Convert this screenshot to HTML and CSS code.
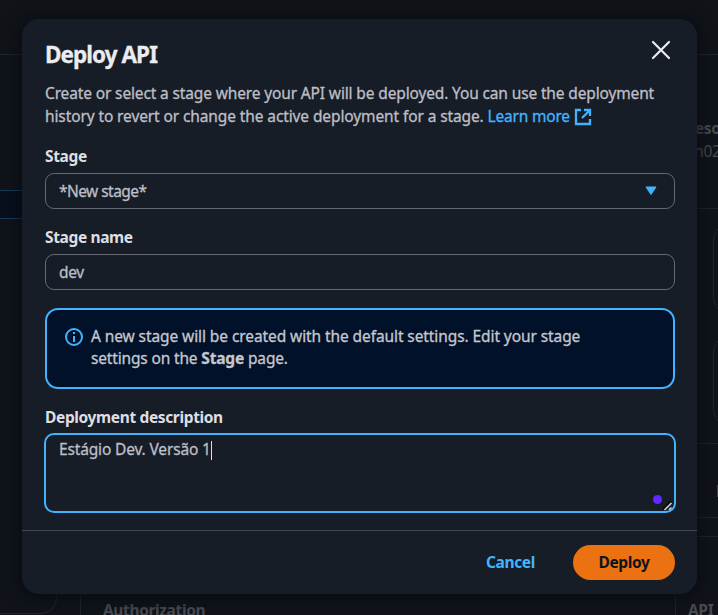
FILE: index.html
```html
<!DOCTYPE html>
<html lang="en">
<head>
<meta charset="utf-8">
<title>Deploy API</title>
<link rel="stylesheet" href="styles.css">
</head>
<body>
<div class="page" aria-hidden="true">
  <div class="topbar"></div>
  <div class="columns">
    <div class="sidebar"><div class="selected"></div></div>
    <div class="main">
      <div class="details"><div class="detail"><b>Resource ID</b><span>hn02</span></div></div>
      <div class="flow"><div class="node"></div><div class="node"></div></div>
      <div class="tabs"><span></span></div>
      <div class="gap"></div>
      <div class="settings"><b class="auth">Authorization</b><b class="key">API</b></div>
    </div>
  </div>
</div>
<div class="modal" role="dialog" aria-label="Deploy API">
  <div class="content">
    <header class="head">
      <h1>Deploy API</h1>
      <button class="close" aria-label="Close"><svg width="20" height="20" viewBox="0 0 20 20"><path d="M2 2 18 18M18 2 2 18"/></svg></button>
    </header>
    <p class="intro"><span class="l1">Create or select a stage where your API will be deployed. You can use the deployment</span><br><span class="l2">history to revert or change the active deployment for a stage.</span> <a class="link"><span class="l3">Learn more</span><svg width="18" height="18" viewBox="0 0 18 18"><path d="M7 2H2V16H16V11M10 2H16V8M16 2 8 10"/></svg></a></p>
    <div class="label"><span>Stage</span></div>
    <div class="field select"><span class="t-new">*New stage*</span><svg width="12" height="10" viewBox="0 0 12 10"><path d="M1 1H11L6 8.500Z"/></svg></div>
    <div class="label"><span>Stage name</span></div>
    <div class="field"><span class="t-dev">dev</span></div>
    <div class="alert">
      <svg width="20" height="20" viewBox="0 0 20 20"><circle cx="10" cy="10" r="8"/><path d="M10 9V15M10 5V7"/></svg>
      <p><span>A new stage will be created with the default settings. Edit your stage</span><br><span class="a2">settings on the <b>Stage</b> page.</span></p>
    </div>
    <div class="label"><span>Deployment description</span></div>
    <div class="area"><span>Estágio Dev. Versão 1</span><i class="caret"></i><i class="dot"></i>
      <svg class="grip" width="10" height="10" viewBox="0 0 10 10"><path class="shade" d="M0 8 8 0"/><path d="M1.500 9 8.500 2M6 9 8.500 6.500"/></svg>
    </div>
  </div>
  <footer class="foot"><button class="cancel">Cancel</button><button class="deploy">Deploy</button></footer>
</div>
</body>
</html>
```
FILE: styles.css
```css
* { box-sizing: border-box; }
html, body { margin: 0; height: 100%; overflow: hidden; }
body { background: #10141a; font-family: "Noto Sans", "Open Sans", sans-serif; font-size: 15.5px; letter-spacing: -0.1px; color: #bebec6; }
h1, p { margin: 0; }
button { border: 0; padding: 0; background: none; font: inherit; letter-spacing: -0.35px; }
span { white-space: nowrap; }

.page { width: 718px; height: 615px; overflow: hidden; color: #494b51; }
.topbar { height: 55px; border-bottom: 1px solid #20252d; background: #101317; }
.columns { display: flex; gap: 23px; }
.sidebar { flex: none; width: 57px; height: 559px; padding-top: 135px; border-right: 1px solid #20252d; border-bottom: 1px solid #20252d; border-radius: 0 0 16px 0; }
.selected { height: 29px; border: 1px solid #153d58; border-width: 1px 0; background: #07101c; }
.main { flex: none; width: 638px; }
.details { height: 154px; padding: 62px 0 0 605px; border-bottom: 1px solid #20252d; }
.detail { display: flex; flex-direction: column; width: 120px; line-height: 23px; letter-spacing: -0.3px; white-space: nowrap; }
.flow { height: 235px; padding: 15px 0 0 633px; border-bottom: 1px solid #20252d; }
.node { width: 80px; height: 90px; margin-bottom: 22px; border: 1px solid #20252d; border-radius: 16px; }
.tabs { height: 74px; padding: 41px 0 0 637px; border-bottom: 1px solid #20252d; }
.tabs span { display: block; width: 2px; height: 12px; background: #44464c; }
.gap { height: 19px; border-bottom: 1px solid #20252d; }
.settings { display: flex; height: 90px; border-left: 1px solid #20252d; letter-spacing: -0.36px; }
.auth { flex: none; width: 594px; padding: 62px 0 0 22px; }
.key { padding: 62px 0 0 12px; border-left: 1px solid #20252d; white-space: nowrap; }

.modal { position: absolute; left: 22px; top: 19px; width: 675px; height: 575px; display: flex; flex-direction: column; border-radius: 17px; background: #161d26; box-shadow: 0 3px 18px 0 #060a11; -webkit-text-stroke: 0.3px; }
.content { height: 511px; padding: 20px 22px 0 23px; }
.head { display: flex; justify-content: space-between; height: 43px; }
h1 { font-size: 22.5px; line-height: 32px; letter-spacing: -0.95px; color: #ebebf0; }
.close { width: 20px; height: 20px; margin: 1px 4px 0 0; }
svg { display: block; flex: none; fill: none; stroke: #42b4ff; stroke-width: 2; }
.close svg { stroke: #ebebf0; stroke-width: 2.2; stroke-linecap: round; }
.intro { line-height: 23px; height: 46px; white-space: nowrap; }
.l1 { letter-spacing: -0.14px; }
.l2 { letter-spacing: -0.11px; }
.l3 { letter-spacing: -0.2px; }
.link { color: #42b4ff; }
.link svg { display: inline-block; vertical-align: -4px; margin-left: 4px; stroke-width: 2.3; }
.label { height: 20px; margin-top: 18px; line-height: 20px; font-weight: 700; letter-spacing: -0.36px; color: #dedee3; -webkit-text-stroke: 0; }
.field { display: flex; align-items: center; justify-content: space-between; height: 36px; margin-top: 7px; padding: 0 17px 0 13px; border: 1px solid #656871; border-radius: 9px; }
.t-new { letter-spacing: -0.55px; }
.t-dev { letter-spacing: -0.3px; }
.select svg { fill: #42b4ff; stroke-width: 1; stroke-linejoin: round; }
.alert { display: flex; gap: 7px; height: 81px; margin-top: 18px; padding: 17px 17px 0; border: 2px solid #42b4ff; border-radius: 13px; background: #001129; }
.alert p { line-height: 22px; margin-top: -2px; letter-spacing: -0.09px; color: #c6c6cd; }
.a2 { letter-spacing: -0.16px; }
.area { position: relative; height: 80px; margin: 6px -1px 0; padding: 2px 13px; border: 2px solid #42b4ff; border-radius: 10px; line-height: 24px; letter-spacing: -0.15px; }
.caret { display: inline-block; width: 1px; height: 19px; background: #dedee3; vertical-align: -5px; }
.dot { position: absolute; right: 12px; bottom: 7px; width: 9px; height: 9px; border-radius: 50%; background: #6129ff; }
.grip { position: absolute; right: 1px; bottom: 0; stroke: #cfcfcf; stroke-width: 1.6; }
.grip .shade { stroke: #05080c; }
.foot { display: flex; justify-content: flex-end; height: 64px; padding: 14px 22px 0; border-top: 1px solid #424650; font-weight: 700; -webkit-text-stroke: 0; }
.cancel { height: 35px; margin-right: 38px; padding-bottom: 2px; color: #42b4ff; }
.deploy { width: 102px; height: 35px; padding-bottom: 2px; border-radius: 18px; background: #ec7211; color: #0f141a; }
```
